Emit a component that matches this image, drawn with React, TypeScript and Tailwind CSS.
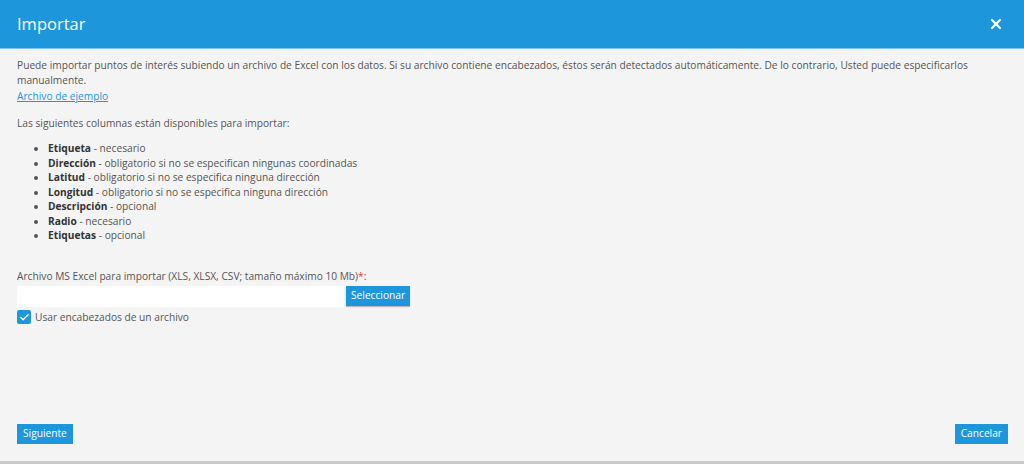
import { Check, X } from "lucide-react";

const columns = [
  { name: "Etiqueta", desc: "necesario" },
  { name: "Dirección", desc: "obligatorio si no se especifican ningunas coordinadas" },
  { name: "Latitud", desc: "obligatorio si no se especifica ninguna dirección" },
  { name: "Longitud", desc: "obligatorio si no se especifica ninguna dirección" },
  { name: "Descripción", desc: "opcional" },
  { name: "Radio", desc: "necesario" },
  { name: "Etiquetas", desc: "opcional" },
];

export default function App() {
  return (
    <div
      className="flex h-[464px] w-[1024px] flex-col bg-[#f4f4f4] text-[10.2px] text-[#555]"
      style={{ fontFamily: '"Open Sans", "Liberation Sans", sans-serif' }}
    >
      <header className="flex h-[49px] shrink-0 items-center justify-between border-b border-[#7fc1ea] bg-[#1e96dc] pl-[17px] pr-[20px]">
        <h1 className="text-[16.5px] text-white">Importar</h1>
        <X className="h-[16px] w-[16px] text-white" strokeWidth={3} />
      </header>

      <div className="flex flex-1 flex-col pl-[17px] pr-[16px] pt-[9px]">
        <p className="leading-[15px]">
          Puede importar puntos de interés subiendo un archivo de Excel con los datos. Si su archivo contiene
          encabezados, éstos serán detectados automáticamente. De lo contrario, Usted puede especificarlos
          manualmente.
        </p>
        <a href="#" className="w-fit leading-[16px] text-[#1e96dc] underline">
          Archivo de ejemplo
        </a>

        <p className="mt-[12px] leading-[15px]">Las siguientes columnas están disponibles para importar:</p>
        <ul className="mt-[10px] list-disc pl-[31px] leading-[14.5px]">
          {columns.map((c) => (
            <li key={c.name}>
              <b className="font-bold text-[#333]">{c.name}</b> - {c.desc}
            </li>
          ))}
        </ul>

        <label className="mt-[26px] leading-[15px]">
          Archivo MS Excel para importar (XLS, XLSX, CSV; tamaño máximo 10 Mb)
          <span className="text-[#e03b3b]">*</span>:
        </label>
        <div className="mt-[2px] flex items-center gap-[2px]">
          <div className="h-[21px] w-[327px] bg-white" />
          <button className="h-[20px] bg-[#1e96dc] px-[5px] text-white shadow-[0_1px_1px_rgba(0,0,0,0.25)]">
            Seleccionar
          </button>
        </div>
        <div className="mt-[3px] flex items-center gap-[4px]">
          <span className="flex h-[14px] w-[14px] items-center justify-center rounded-[2px] bg-[#1e96dc]">
            <Check className="h-[11px] w-[11px] text-white" strokeWidth={3} />
          </span>
          <span>Usar encabezados de un archivo</span>
        </div>

        <div className="mt-auto mb-[17px] flex items-center justify-between">
          <button className="h-[20px] bg-[#1e96dc] px-[6px] text-white">Siguiente</button>
          <button className="h-[20px] bg-[#1e96dc] px-[6px] text-white">Cancelar</button>
        </div>
      </div>
      <div className="h-[3px] shrink-0 bg-[#c8c8c8]" />
    </div>
  );
}
